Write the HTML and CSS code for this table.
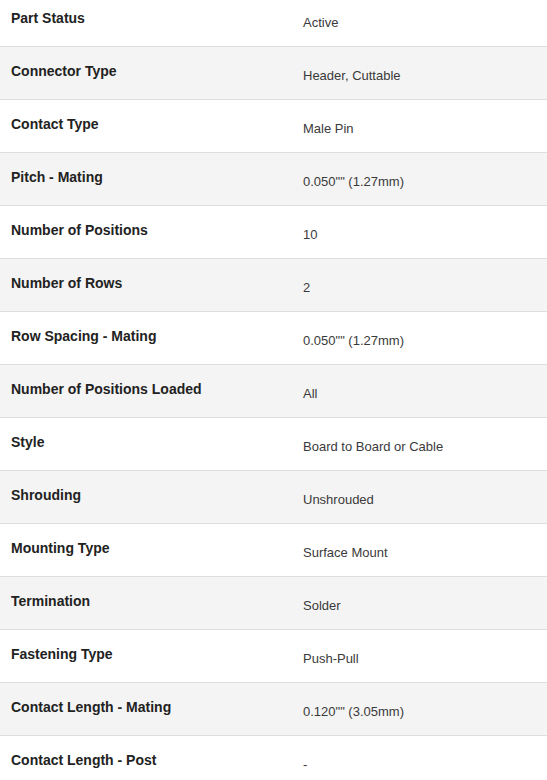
FILE: index.html
```html
<!DOCTYPE html>
<html lang="en">
<head>
<meta charset="utf-8">
<title>Product Attributes</title>
<link rel="stylesheet" href="styles.css">
</head>
<body>
<div class="specs">
  <div class="row"><div class="label">Part Status</div><div class="value">Active</div></div>
  <div class="row alt"><div class="label">Connector Type</div><div class="value">Header, Cuttable</div></div>
  <div class="row"><div class="label">Contact Type</div><div class="value">Male Pin</div></div>
  <div class="row alt"><div class="label">Pitch - Mating</div><div class="value">0.050"" (1.27mm)</div></div>
  <div class="row"><div class="label">Number of Positions</div><div class="value">10</div></div>
  <div class="row alt"><div class="label">Number of Rows</div><div class="value">2</div></div>
  <div class="row"><div class="label">Row Spacing - Mating</div><div class="value">0.050"" (1.27mm)</div></div>
  <div class="row alt"><div class="label">Number of Positions Loaded</div><div class="value">All</div></div>
  <div class="row"><div class="label">Style</div><div class="value">Board to Board or Cable</div></div>
  <div class="row alt"><div class="label">Shrouding</div><div class="value">Unshrouded</div></div>
  <div class="row"><div class="label">Mounting Type</div><div class="value">Surface Mount</div></div>
  <div class="row alt"><div class="label">Termination</div><div class="value">Solder</div></div>
  <div class="row"><div class="label">Fastening Type</div><div class="value">Push-Pull</div></div>
  <div class="row alt"><div class="label">Contact Length - Mating</div><div class="value">0.120"" (3.05mm)</div></div>
  <div class="row"><div class="label">Contact Length - Post</div><div class="value">-</div></div>
</div>
</body>
</html>
```
FILE: styles.css
```css
html, body {
  margin: 0;
  padding: 0;
  background: #ffffff;
  overflow: hidden;
}

body {
  font-family: "Liberation Sans", Arial, sans-serif;
  font-size: 13px;
  line-height: 15px;
}

.specs {
  margin-top: -6px;
  width: 547px;
}

.row {
  display: grid;
  grid-template-columns: 292px 1fr;
  height: 52px;
  border-bottom: 1px solid #dedede;
  background: #ffffff;
}

.row.alt {
  background: #f4f4f4;
}

.label {
  padding: 16px 0 0 11px;
  font-size: 14px;
  line-height: 16px;
  font-weight: bold;
  color: #222222;
}

.value {
  padding: 21px 0 0 11px;
  color: #3a3a3a;
}
```
